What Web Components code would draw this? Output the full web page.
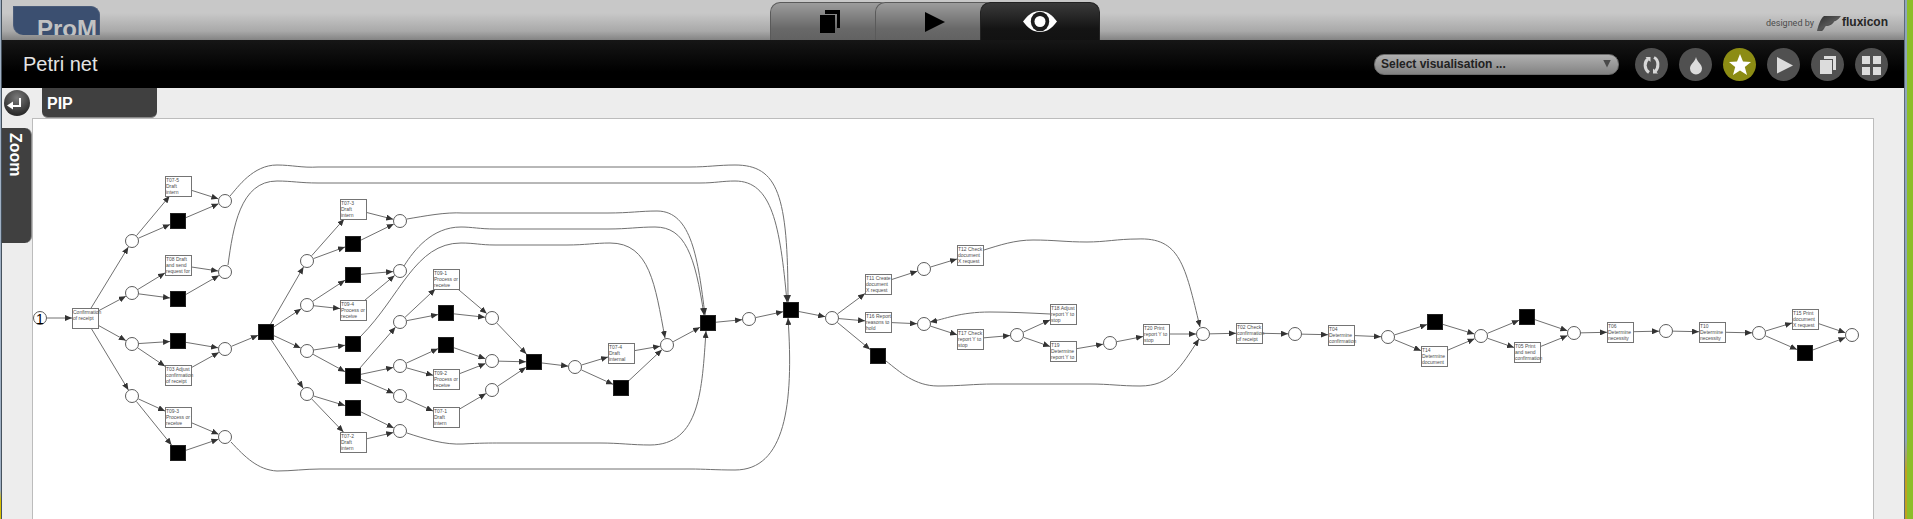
<!DOCTYPE html>
<html lang="en">
<head>
<meta charset="utf-8">
<title>ProM - Petri net</title>
<style>
  body { margin: 0; font-family: "Liberation Sans", Arial, sans-serif; }
</style>
</head>
<body>
<prom-desktop>
  <prom-window>
    <prom-header slot="header"></prom-header>
    <prom-titlebar slot="title">Petri net</prom-titlebar>
    <prom-view slot="view"><petri-net></petri-net></prom-view>
  </prom-window>
</prom-desktop>

<script>
function define(name, html, setup) {
  const template = document.createElement('template');
  template.innerHTML = html;
  customElements.define(name, class extends HTMLElement {
    constructor() {
      super();
      this.attachShadow({ mode: 'open' }).append(template.content.cloneNode(true));
    }
    connectedCallback() {
      if (setup && !this.ready) { this.ready = true; setup(this, this.shadowRoot); }
    }
  });
}

/* Desktop behind the window */
define('prom-desktop', `
  <style>
    :host { display: flex; min-height: 100vh; background: linear-gradient(#9fb0c4 490px, #d8c000 500px); }
    ::slotted(*) { flex: 1; margin-left: 1px; }
    .strip { width: 2px; background: linear-gradient(#8fa5bb 440px, #c0a020 470px); }
    .green { width: 6px; background: #8cbe28; }
  </style>
  <slot></slot><div class="strip"></div><div class="green"></div>`);

define('prom-window', `
  <style>
    :host { display: flex; flex-direction: column; min-width: 0; background: #ededed;
      border-left: 1px solid #46525e; border-right: 1px solid #5c6a78; }
    ::slotted([slot=view]) { flex: 1; }
  </style>
  <slot name="header"></slot><slot name="title"></slot><slot name="view"></slot>`);

/* Grey top bar */
define('prom-header', `
  <style>
    :host { display: flex; justify-content: space-between; height: 40px; padding: 0 16px 0 11px;
      background: linear-gradient(#c8c8c8 0 13px, #a9a9a9 31px, #838383 40px); }
    nav { display: flex; align-items: flex-end; padding-left: 4px; }
    prom-tab + prom-tab { margin-left: -15px; }
    prom-credit { margin-top: 14px; }
  </style>
  <prom-logo></prom-logo>
  <nav aria-label="Perspectives">
    <prom-tab label="Workspace"><svg width="20" height="23" viewBox="0 0 20 23"><path d="M5 0h15v18h-3V4H5zM0 5h15v18H0z"/></svg></prom-tab>
    <prom-tab label="Actions"><svg width="20" height="20" viewBox="0 0 20 20"><path d="M0 0L20 10L0 20z"/></svg></prom-tab>
    <prom-tab label="Views" active><svg width="34" height="21" viewBox="0 0 34 21"><path fill="#fff" d="M0 10.500C5 4 10 0 17 0S29 4 34 10.500C29 17 24 21 17 21S5 17 0 10.500z"/><ellipse cx="17" cy="10.500" rx="9.200" ry="9.800" fill="#1c1c1c"/><circle cx="17" cy="10.500" r="5.500" fill="#fff"/></svg></prom-tab>
  </nav>
  <prom-credit></prom-credit>`);

define('prom-logo', `
  <style>
    :host { display: block; width: 87px; height: 29px; margin-top: 6px; overflow: hidden; box-sizing: border-box;
      border-radius: 0 9px 0 10px; background: #3b4f70; border: 1px solid #4a5c7a; border-bottom: 0;
      color: #c2c2c2; font: bold 24px/28px "Liberation Sans", Arial, sans-serif; text-align: right; }
    span { display: block; padding: 8px 2px 0 0; }
  </style>
  <span>ProM</span>`);

define('prom-tab', `
  <style>
    :host { display: block; }
    button { display: flex; align-items: center; justify-content: center; width: 120px; height: 38px; padding: 0;
      border: 1px solid #5a5a5a; border-bottom: 0; border-radius: 10px 10px 0 0;
      background: linear-gradient(#9c9c9c, #686868 26px, #626262); }
    :host([active]) button { border-color: #222; background: linear-gradient(#3a3a3a, #141414 26px, #121212); }
  </style>
  <button type="button"><slot></slot></button>`,
  (el, root) => root.querySelector('button').setAttribute('aria-label', el.getAttribute('label')));

define('prom-credit', `
  <style>
    :host { display: flex; align-items: flex-start; height: 20px; }
    small { font: 9px/18px Roboto, "Liberation Sans", sans-serif; color: #4c4c4c; }
    svg { margin: 2px 1px 0 3px; }
    b { font-size: 12px; line-height: 16px; color: #262626; }
  </style>
  <small>designed by</small>
  <svg width="24" height="16" viewBox="0 0 24 16"><defs><linearGradient id="g" x2="1" y2="1"><stop stop-color="#2c2c2c"/><stop offset=".5" stop-color="#555"/><stop offset="1" stop-color="#222"/></linearGradient></defs><path fill="url(#g)" d="M7 0H24C21 4 19 5 17 5.500C16 8 13 10 9 10C8 10 7 14 5 15H0C1 11 3 3 7 0z"/></svg>
  <b>fluxicon</b>`);

/* Black bar: title, drop-down and round actions */
define('prom-titlebar', `
  <style>
    :host { display: flex; align-items: center; height: 48px; padding: 0 16px 0 21px; color: #e4e4e4;
      background: linear-gradient(#161616, #000 32px); }
    h1 { flex: 1; margin: 0; font-size: 20px; line-height: 24px; font-weight: normal; }
    .actions { display: flex; gap: 11px; margin-left: 16px; }
  </style>
  <h1><slot></slot></h1>
  <prom-select></prom-select>
  <div class="actions">
    <prom-action label="Refresh"><svg width="33" height="33" viewBox="0 0 33 33" fill="none" stroke="#d8d8d8" stroke-width="3"><path d="M14 24.500C9 21 9 14 13 11M19 9.500C24 12 24 20 20 23.500"/><path fill="#d8d8d8" stroke="none" d="M10.500 9H15.500V14zM23 25.500H18V20.500z"/></svg></prom-action>
    <prom-action label="Colour"><svg width="33" height="33" viewBox="0 0 33 33"><path fill="#dcdcdc" d="M17 9C18 14 23 16 23 20.500A6 6 0 0 1 11 20.500C11 16 16 14 17 9z"/></svg></prom-action>
    <prom-action label="Favourite" active><svg width="33" height="33" viewBox="0 0 33 33"><path fill="#fff" d="M17 6L20 13.500L28 14L21.800 19L24 27L17 22.500L10 27L12.200 19L6 14L14 13.500z"/></svg></prom-action>
    <prom-action label="Run"><svg width="33" height="33" viewBox="0 0 33 33"><path fill="#dcdcdc" d="M10 9L26 17.500L10 25.500z"/></svg></prom-action>
    <prom-action label="Copy"><svg width="33" height="33" viewBox="0 0 33 33" fill="#dcdcdc"><path d="M13 8H25V22H22V11H13z"/><path d="M9 12H21V26H9z"/></svg></prom-action>
    <prom-action label="Overview"><svg width="33" height="33" viewBox="0 0 33 33" fill="#dcdcdc"><path d="M7 8h8v8h-8zM18 8h8v8h-8zM7 19h8v8h-8zM18 19h8v8h-8z"/></svg></prom-action>
  </div>`);

define('prom-select', `
  <style>
    :host { display: block; position: relative; }
    select { appearance: none; display: block; width: 245px; height: 21px; padding: 0 24px 0 6px; border: 1px solid #6c6c6c;
      border-radius: 10px; background: linear-gradient(#b0b0b0, #828282); color: #222;
      font: bold 12px/18px "Liberation Sans", Arial, sans-serif; }
    i { position: absolute; right: 8px; top: 6px; width: 8px; height: 8px; background: #4a4a4a;
      clip-path: polygon(0 0, 100% 0, 50% 100%); pointer-events: none; }
  </style>
  <select aria-label="Visualisation"><option>Select visualisation ...</option></select><i></i>`);

define('prom-action', `
  <style>
    :host { display: block; }
    button { display: block; width: 33px; height: 33px; padding: 0; border: 0; border-radius: 50%; background: #505050; }
    :host([active]) button { background: #8c8c14; }
    ::slotted(svg) { display: block; }
  </style>
  <button type="button"><slot></slot></button>`,
  (el, root) => root.querySelector('button').setAttribute('aria-label', el.getAttribute('label')));

/* Work area: side rail, top panel tab and canvas */
define('prom-view', `
  <style>
    :host { display: grid; grid-template: 30px 1fr / 30px 1fr; padding-right: 30px; }
    .back { margin: 2px; width: 26px; height: 26px; padding: 0; border: 0; border-radius: 50%;
      background: radial-gradient(circle at 50% 30%, #7a7a7a, #2c2c2c 75%); }
    .back svg { display: block; }
    .pip, .zoom { border: 0; background: #404040; color: #fff; font: bold 16px/20px "Liberation Sans", Arial, sans-serif; text-align: left; }
    .pip { margin-left: 10px; width: 115px; height: 30px; padding: 2px 5px 0; border-radius: 0 0 6px 6px; border-bottom: 1px solid #8a8a8a; }
    .zoom { box-sizing: border-box; margin-top: 10px; width: 30px; height: 115px; padding: 5px 6px 5px 4px; border-radius: 0 7px 7px 0; writing-mode: vertical-rl; border-right: 1px solid #8a8a8a; }
    main { background: #fff; border: 1px solid #bcbcbc; border-bottom: 0; overflow: hidden; }
  </style>
  <button class="back" type="button" aria-label="Back"><svg width="26" height="26" viewBox="0 0 26 26"><path fill="none" stroke="#fff" stroke-width="2" d="M16 8V16H8"/><path fill="#fff" d="M3 15.500L9 11.500V19.500z"/></svg></button>
  <div><button class="pip" type="button">PIP</button></div>
  <div><button class="zoom" type="button">Zoom</button></div>
  <main><slot></slot></main>`);

/* Nodes of the net, centred on their x and y attributes */
const place = (el) => { el.style.left = el.getAttribute('x') + 'px'; el.style.top = el.getAttribute('y') + 'px'; };

define('net-place', `
  <style>
    :host { position: absolute; box-sizing: border-box; width: 14px; height: 14px; margin: -7px 0 0 -7px;
      display: grid; place-items: center; border: 1px solid #5c5c5c; border-radius: 50%; background: #fff;
      color: #000; font-size: 14px; line-height: 14px; }
  </style><slot></slot>`, place);

define('net-silent', `
  <style>
    :host { position: absolute; box-sizing: border-box; width: 16px; height: 16px; margin: -8px 0 0 -8px;
      background: #000; border: 1px solid #222; }
  </style>`, place);

define('net-task', `
  <style>
    :host { position: absolute; box-sizing: border-box; width: 27px; height: 21px; margin: -10px 0 0 -13px;
      background: #fff; border: 1px solid #747474; color: #4c4c4c; }
    span { display: block; white-space: pre; font-size: 5px; line-height: 6px; }
  </style><span><slot></slot></span>`, place);

/* Kinds: p = place, s = silent step, t = task */
const nodes = {
  start: ['p', 40, 318, '1'], conf: ['t', 85, 318, 'Confirmation\nof receipt'],
  a1: ['p', 132, 241], a2: ['p', 132, 293], a3: ['p', 132, 344], a4: ['p', 132, 396],
  t075: ['t', 178, 186, 'T07-5\nDraft\nintern'], b1: ['s', 178, 221],
  t08: ['t', 178, 265, 'T08 Draft\nand send\nrequest for'], b2: ['s', 178, 299],
  b3: ['s', 178, 341], t03: ['t', 178, 375, 'T03 Adjust\nconfirmation\nof receipt'],
  t093: ['t', 178, 417, 'T09-3\nProcess or\nreceive'], b4: ['s', 178, 453],
  c1: ['p', 225, 201], c2: ['p', 225, 272], c3: ['p', 225, 349], c4: ['p', 225, 437],
  d: ['s', 266, 332],
  e1: ['p', 307, 261], e2: ['p', 307, 305], e3: ['p', 307, 351], e4: ['p', 307, 394],
  t073: ['t', 353, 209, 'T07-3\nDraft\nintern'], f1: ['s', 353, 244], f2: ['s', 353, 275],
  t094: ['t', 353, 310, 'T09-4\nProcess or\nreceive'], f3: ['s', 353, 344], f4: ['s', 353, 376], f5: ['s', 353, 408],
  t072: ['t', 353, 442, 'T07-2\nDraft\nintern'],
  g1: ['p', 400, 221], g2: ['p', 400, 271], g3: ['p', 400, 322], g4: ['p', 400, 366], g5: ['p', 400, 396], g6: ['p', 400, 431],
  t091: ['t', 446, 279, 'T09-1\nProcess or\nreceive'], h1: ['s', 446, 313], h2: ['s', 446, 345],
  t092: ['t', 446, 379, 'T09-2\nProcess or\nreceive'], t071: ['t', 446, 417, 'T07-1\nDraft\nintern'],
  i1: ['p', 492, 318], i2: ['p', 492, 361], i3: ['p', 492, 390],
  j: ['s', 534, 362], k: ['p', 575, 367], t074: ['t', 621, 353, 'T07-4\nDraft\ninternal'], l: ['s', 621, 388],
  m: ['p', 667, 345], n: ['s', 708, 323], o: ['p', 749, 319], q: ['s', 791, 310], r: ['p', 832, 318],
  t11: ['t', 878, 284, 'T11 Create\ndocument\nX request'], t16: ['t', 878, 322, 'T16 Report\nreasons to\nhold'], u: ['s', 878, 356],
  v1: ['p', 924, 269], v2: ['p', 924, 324],
  t12: ['t', 970, 255, 'T12 Check\ndocument\nX request'], t17: ['t', 970, 339, 'T17 Check\nreport Y to\nstop'],
  w: ['p', 1017, 335], t18: ['t', 1063, 314, 'T18 Adjust\nreport Y to\nstop'], t19: ['t', 1063, 351, 'T19\nDetermine\nreport Y to'],
  x: ['p', 1110, 343], t20: ['t', 1156, 334, 'T20 Print\nreport Y to\nstop'], y: ['p', 1203, 334],
  t02: ['t', 1249, 333, 'T02 Check\nconfirmation\nof receipt'], z1: ['p', 1295, 334],
  t04: ['t', 1341, 335, 'T04\nDetermine\nconfirmation'], z2: ['p', 1388, 337],
  s1: ['s', 1435, 322], t14: ['t', 1434, 356, 'T14\nDetermine\ndocument'], z3: ['p', 1481, 336],
  s2: ['s', 1527, 317], t05: ['t', 1527, 352, 'T05 Print\nand send\nconfirmation'], z4: ['p', 1574, 333],
  t06: ['t', 1620, 332, 'T06\nDetermine\nnecessity'], z5: ['p', 1666, 331],
  t10: ['t', 1712, 332, 'T10\nDetermine\nnecessity'], z6: ['p', 1759, 333],
  t15: ['t', 1805, 319, 'T15 Print\ndocument\nX request'], s3: ['s', 1805, 353], end: ['p', 1852, 335],
};

const links = `start conf|conf a1|conf a2|conf a3|conf a4|a1 t075|a1 b1|a2 t08|a2 b2|a3 b3|a3 t03|a4 t093|a4 b4
|t075 c1|b1 c1|t08 c2|b2 c2|b3 c3|t03 c3|t093 c4|b4 c4|c3 d|d e1|d e2|d e3|d e4|e1 t073|e1 f1|e2 f2|e2 t094|e3 f3|e3 f4
|e4 f5|e4 t072|t073 g1|f1 g1|f2 g2|t094 g2|f4 g3|f4 g4|f4 g5|f5 g6|t072 g6|g3 t091|g3 h1|g4 h2|g4 t092|g5 t071
|t091 i1|h1 i1|h2 i2|t092 i2|t071 i3|i1 j|i2 j|i3 j|j k|k t074|k l|t074 m|l m|m n|n o|o q|q r|r t11|r t16|r u
|t11 v1|v1 t12|t16 v2|v2 t17|t17 w|w t18|w t19|t19 x|x t20|t20 y|y t02|t02 z1|z1 t04|t04 z2|z2 s1|z2 t14|s1 z3|t14 z3
|z3 s2|z3 t05|s2 z4|t05 z4|z4 t06|t06 z5|z5 t10|t10 z6|z6 t15|z6 s3|t15 end|s3 end`
  .split('|').map(pair => pair.trim().split(' '));

const curves = [
  'M230 196C238 187 253 165 277 165C292 165 302 168 318 167L690 167C708 167 718 165 735 165C778 165 788 195 788 302',
  'M228 265C233 228 240 181 277 181C292 181 300 183 318 183L700 183C715 183 722 181 735 181C772 181 780 225 787 302',
  'M407 219C425 216 445 212 463 213L608 213C630 213 640 211 657 211C692 211 698 260 705 315',
  'M404 266C414 250 432 227 461 227C472 227 480 229 495 229L608 229C628 229 638 227 655 227C685 227 695 255 704 315',
  'M361 336C400 297 415 243 461 243C475 243 480 245 495 245L567 245C585 245 595 243 610 243C650 243 655 285 665 338',
  'M407 433C425 439 445 445 463 444C480 443 490 443 500 443L600 443C620 443 632 445 650 445C700 445 702 390 706 331',
  'M231 442C245 457 258 470 277 471C292 471 305 469 320 469L690 469C705 469 715 470 735 470C785 470 794 405 788 318',
  'M984 250C1000 245 1015 240 1033 240C1055 240 1065 242 1087 242C1105 242 1118 239 1137 239C1180 237 1185 265 1200 327',
  'M886 361C900 372 915 386 938 386C960 386 975 384 993 384L1090 384C1110 384 1120 386 1140 386C1170 386 1180 368 1199 339',
  'M1050 314C1030 313 1010 312 990 312C960 312 945 319 930 322',
];

/* Distance from a node's centre to its border in the direction (ux, uy) */
function reach(kind, ux, uy) {
  if (kind === 'p') return 7;
  const [w, h] = kind === 's' ? [8, 8] : [13, 10];
  return Math.min(w / Math.abs(ux || 1e-6), h / Math.abs(uy || 1e-6));
}

define('petri-net', `
  <style>
    :host { display: block; position: relative; width: 1840px; height: 400px; }
    .origin { position: absolute; left: -33px; top: -119px; }
    svg { display: block; }
  </style>
  <div class="origin">
    <svg width="1880" height="500" viewBox="0 0 1880 500" fill="none" stroke="#707070" aria-hidden="true">
      <defs><marker id="tip" viewBox="0 0 7 6" refX="7" refY="3" markerWidth="7" markerHeight="6" markerUnits="userSpaceOnUse" orient="auto"><path d="M0 0L7 3L0 6z" fill="#333" stroke="none"/></marker></defs>
      <g class="edges"></g>
    </svg>
  </div>`,
  (el, root) => {
    const edge = (d) => {
      const path = document.createElementNS('http://www.w3.org/2000/svg', 'path');
      path.setAttribute('d', d);
      path.setAttribute('marker-end', 'url(#tip)');
      root.querySelector('.edges').append(path);
    };
    for (const [from, to] of links) {
      const [k1, x1, y1] = nodes[from], [k2, x2, y2] = nodes[to];
      const len = Math.hypot(x2 - x1, y2 - y1), ux = (x2 - x1) / len, uy = (y2 - y1) / len;
      const a = reach(k1, ux, uy), b = reach(k2, ux, uy);
      edge(`M${x1 + ux * a} ${y1 + uy * a}L${x2 - ux * b} ${y2 - uy * b}`);
    }
    curves.forEach(edge);
    const names = { p: 'net-place', s: 'net-silent', t: 'net-task' };
    for (const [kind, x, y, text] of Object.values(nodes)) {
      const node = document.createElement(names[kind]);
      node.setAttribute('x', x);
      node.setAttribute('y', y);
      if (text) node.textContent = text;
      root.querySelector('.origin').append(node);
    }
  });
</script>
</body>
</html>
